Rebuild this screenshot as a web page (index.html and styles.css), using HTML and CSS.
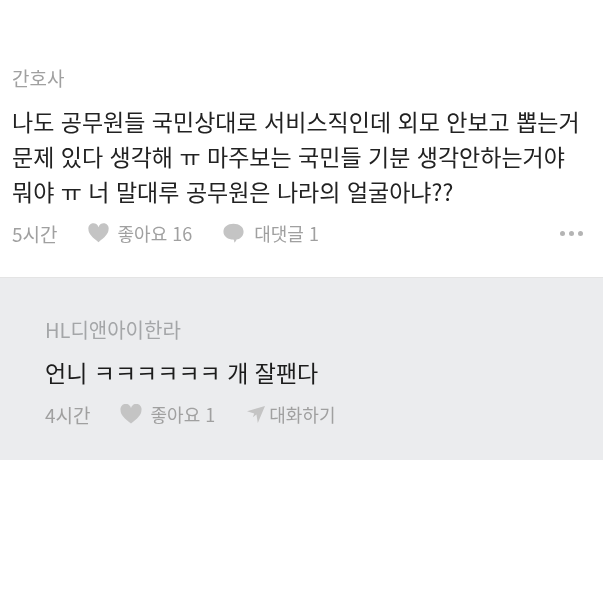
FILE: index.html
```html
<!DOCTYPE html>
<html lang="ko">
<head>
    <meta charset="UTF-8">
    <meta name="viewport" content="width=device-width, initial-scale=1.0">
    <title>간호사</title>
    <link rel="stylesheet" href="styles.css">
</head>
<body>
<div class="post">
    <div class="name">간호사</div>
    <p class="text">나도 공무원들 국민상대로 서비스직인데 외모 안보고 뽑는거<br>문제 있다 생각해 ㅠ 마주보는 국민들 기분 생각안하는거야<br>뭐야 ㅠ 너 말대루 공무원은 나라의 얼굴아냐??</p>
    <div class="meta">
        <span class="time">5시간</span>
        <svg class="icon heart" viewBox="0 0 24 22"><path d="M12 21.500C5 16 .5 12 .5 6.800A5.800 5.800 0 0 1 12 4.500 5.800 5.800 0 0 1 23.500 6.800C23.500 12 19 16 12 21.500z"/></svg>
        <span class="like">좋아요 16</span>
        <svg class="icon bubble" viewBox="0 0 24 24"><path d="M12 1.500c6.500 0 11.500 3.500 11.500 9S19 19 15.500 19.500c-.5 1.800-1.500 2.800-2.800 3.500.3-1.200.1-2.500-.7-3.500C6 19.500.5 16 .5 10.500S5.500 1.500 12 1.500z"/></svg>
        <span class="reply">대댓글 1</span>
        <span class="more"><i></i><i></i><i></i></span>
    </div>
</div>
<div class="comment">
    <div class="name">HL디앤아이한라</div>
    <p class="text">언니 ㅋㅋㅋㅋㅋㅋ 개 잘팬다</p>
    <div class="meta">
        <span class="time">4시간</span>
        <svg class="icon heart" viewBox="0 0 24 22"><path d="M12 21.500C5 16 .5 12 .5 6.800A5.800 5.800 0 0 1 12 4.500 5.800 5.800 0 0 1 23.500 6.800C23.500 12 19 16 12 21.500z"/></svg>
        <span class="like">좋아요 1</span>
        <svg class="icon send" viewBox="0 0 20 20"><path d="M0 7 20 1 12 20 10.500 10.500 6.500 13.500 8 9.500z"/></svg>
        <span class="reply">대화하기</span>
    </div>
</div>
</body>
</html>
```
FILE: styles.css
```css
/* General Styles */
body {
    margin: 0;
    background-color: #fff;
    font-family: "Noto Sans CJK KR", "Noto Sans", sans-serif;
    color: #222;
    filter: blur(0.5px);
}

.name {
    line-height: 24px;
    color: #a0a0a0;
}

.text {
    font-size: 23px;
    line-height: 35px;
}

.meta {
    display: flex;
    align-items: center;
    height: 24px;
    font-size: 18px;
    color: #a0a0a0;
}

.time {
    font-size: 19px;
}

.icon {
    fill: #c4c4c4;
}

/* Post */
.post {
    padding: 66px 12px 0;
    height: 211px;
}

.post .name {
    font-size: 19px;
}

.post .text {
    margin: 14px 0 0;
}

.post .meta {
    margin-top: 12px;
}

.post .heart {
    width: 21px;
    height: 20px;
    margin-left: 30px;
    margin-right: 9px;
}

.post .bubble {
    width: 21px;
    height: 22px;
    margin-left: 31px;
    margin-right: 10px;
}

.more {
    margin-left: auto;
    display: flex;
    gap: 4px;
    padding-right: 8px;
}

.more i {
    width: 5px;
    height: 5px;
    border-radius: 50%;
    background-color: #b4b4b4;
}

/* Comment */
.comment {
    height: 183px;
    padding: 40px 45px 0;
    box-sizing: border-box;
    background-color: #ebecee;
    border-top: 1px solid #e4e4e4;
}

.comment .name {
    font-size: 20px;
    color: #a4a6a8;
}

.comment .text {
    margin: 13px 0 0;
    color: #1c1c1c;
}

.comment .meta {
    margin-top: 12px;
}

.comment .heart {
    width: 22px;
    height: 20px;
    margin-left: 29px;
    margin-right: 9px;
}

.comment .send {
    width: 18px;
    height: 18px;
    margin-left: 32px;
    margin-right: 4px;
}
```
